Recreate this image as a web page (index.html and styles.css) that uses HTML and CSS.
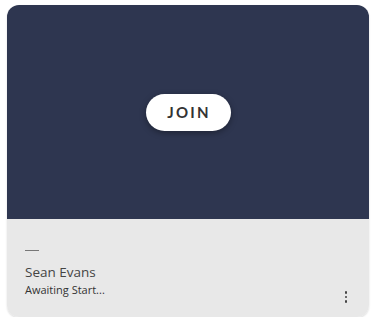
FILE: index.html
```html
<!DOCTYPE html>
<html>
<head>
<meta charset="utf-8">
<link rel="stylesheet" href="styles.css">
</head>
<body>
<div class="card">
  <div class="stage">
    <button class="join">JOIN</button>
  </div>
  <div class="info">
    <div class="dash"></div>
    <div class="name">Sean Evans</div>
    <div class="row">
      <div class="status">Awaiting Start...</div>
      <div class="more"><span></span><span></span><span></span></div>
    </div>
  </div>
</div>
</body>
</html>
```
FILE: styles.css
```css
html, body { margin: 0; padding: 0; background: #fff; }
body { padding: 5px 0 0 7px; font-family: "Open Sans", Lato, sans-serif; }
.card {
  width: 362px;
  height: 312px;
  border-radius: 12px;
  overflow: hidden;
  display: flex;
  flex-direction: column;
  box-shadow: 0 1px 2px rgba(0,0,0,0.15);
}
.stage {
  height: 214px;
  background: #2e3650;
  display: flex;
  align-items: center;
  justify-content: center;
}
.join {
  width: 85px;
  height: 37px;
  border: none;
  border-radius: 19px;
  background: #fff;
  color: #333;
  font-family: Lato, sans-serif;
  font-weight: 700;
  font-size: 15px;
  letter-spacing: 2.2px;
  padding: 0 0 0 2px;
  box-shadow: 0 2px 6px rgba(0,0,0,0.35);
}
.info {
  flex: 1;
  background: #e8e8e8;
  padding: 31px 0 0 18px;
  color: #333;
}
.dash { width: 14px; height: 1px; background: #777; }
.name { margin-top: 13px; font-size: 13.5px; line-height: 16px; color: #444; }
.row { display: flex; justify-content: space-between; align-items: flex-start; }
.status { margin-top: 3px; font-size: 11px; line-height: 14px; color: #333; }
.more { display: flex; flex-direction: column; gap: 2px; margin: 11px 22px 0 0; }
.more span { width: 2.5px; height: 2.5px; border-radius: 50%; background: #444; }
```
